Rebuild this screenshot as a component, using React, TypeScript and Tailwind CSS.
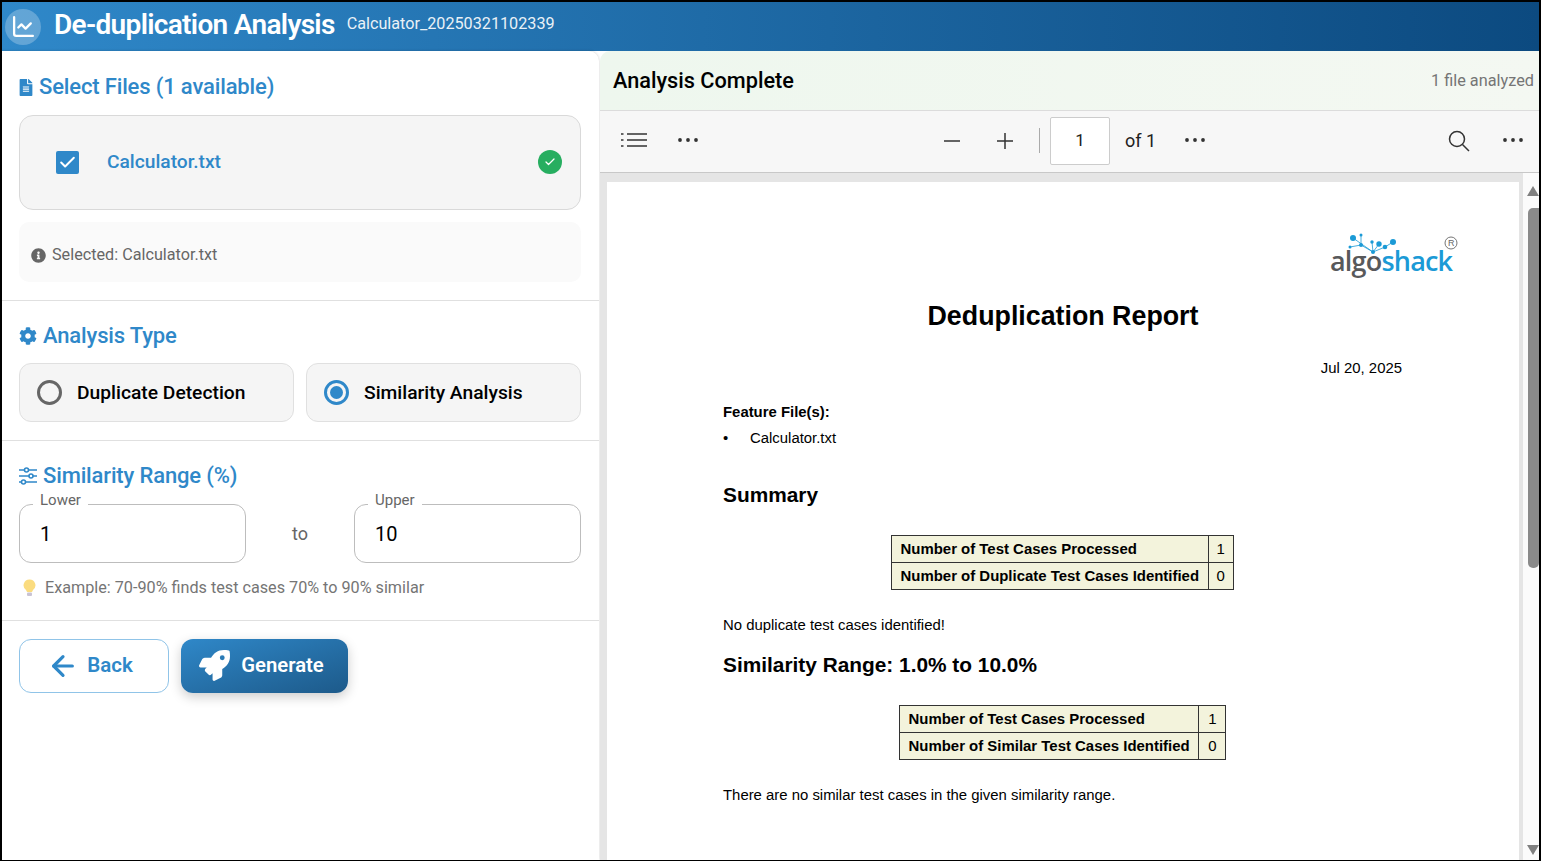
import { ArrowLeft, Check, ChartLine } from 'lucide-react'
import { FaCog, FaFileAlt, FaInfoCircle, FaRocket } from 'react-icons/fa'

const roboto = "font-['Roboto',sans-serif]"

function Dots() {
  return (
    <svg width="22" height="6" viewBox="0 0 22 6" className="shrink-0">
      <circle cx="3" cy="3" r="1.9" fill="#333" />
      <circle cx="11" cy="3" r="1.9" fill="#333" />
      <circle cx="19" cy="3" r="1.9" fill="#333" />
    </svg>
  )
}

function SlidersIcon() {
  return (
    <svg width="18" height="18" viewBox="0 0 18 18" fill="#fff" stroke="#2f88c9" strokeWidth="1.6">
      <path d="M0 3 H18 M0 9 H18 M0 15 H18" />
      <circle cx="7.5" cy="3" r="2" />
      <circle cx="12" cy="9" r="2" />
      <circle cx="4.5" cy="15" r="2" />
    </svg>
  )
}

function Radio({ label, checked }: { label: string; checked?: boolean }) {
  return (
    <div className="flex-1 h-[59px] flex items-center gap-[15px] pl-[17px] bg-[#f5f5f5] border border-[#e0e0e0] rounded-[12px]">
      {checked ? (
        <span className="w-[25px] h-[25px] rounded-full border-[3px] border-[#2f88c9] flex items-center justify-center">
          <span className="w-[13px] h-[13px] rounded-full bg-[#2f88c9]" />
        </span>
      ) : (
        <span className="w-[25px] h-[25px] rounded-full border-[3px] border-[#666]" />
      )}
      <span className="pt-[1px] text-[19.25px] font-medium text-black">{label}</span>
    </div>
  )
}

function RangeField({ label, value }: { label: string; value: string }) {
  return (
    <div className="relative flex-1 h-[59px] border border-[#bdbdbd] rounded-[12px] flex items-center pl-[20px] text-[20px] text-black">
      <span className="absolute left-[13px] top-[-14px] bg-white px-[7px] text-[15px] leading-[18px] text-[#666]">{label}</span>
      {value}
    </div>
  )
}

function ReportTable({ rows, className, countClass }: { rows: [string, string][]; className: string; countClass: string }) {
  return (
    <table className={`border-collapse bg-[#f3f3dc] text-[14.95px] leading-[17px] text-black ${className}`}>
      <tbody>
        {rows.map(([name, count]) => (
          <tr key={name}>
            <td className="border border-[#333] px-[8.5px] pt-[4px] pb-[5px] font-bold">{name}</td>
            <td className={`border border-[#333] pt-[4px] pb-[5px] text-center ${countClass}`}>{count}</td>
          </tr>
        ))}
      </tbody>
    </table>
  )
}

function Logo() {
  return (
    <div className="relative w-[128px] h-[45px] self-end mr-[61px]">
      <svg width="128" height="45" viewBox="0 0 128 45" className="absolute left-0 top-0">
        <g stroke="#1b9ad6" strokeWidth="0.8" fill="none">
          <path d="M23 6 L43 20 M20 15 L31 13 L43 20 M31 3 L31 13 M43 20 L42 10 M43 20 L49 12 M43 20 L55 15 L63 10" />
        </g>
        <g fill="#1b9ad6">
          <circle cx="23" cy="6" r="3" /><circle cx="31" cy="3" r="1.5" /><circle cx="20" cy="15" r="1.5" />
          <circle cx="31" cy="13" r="2" /><circle cx="43" cy="20" r="2" /><circle cx="42" cy="10" r="1.7" />
          <circle cx="49" cy="12" r="2.7" /><circle cx="55" cy="15" r="2.3" /><circle cx="63" cy="10" r="3" />
        </g>
        <circle cx="121" cy="11" r="6" fill="none" stroke="#666" strokeWidth="0.9" />
      </svg>
      <span className="absolute left-[118px] top-[5px] w-[6px] text-[9px] leading-[12px] text-[#666]">R</span>
      <span className="absolute left-0 top-[18px] text-[27px] leading-[22px] font-semibold font-['Open_Sans',sans-serif] tracking-[-0.8px]">
        <span className="text-[#58595b]">algo</span>
        <span className="text-[#1b9ad6]">shack</span>
      </span>
    </div>
  )
}

export default function App() {
  return (
    <div className={`w-[1541px] h-[861px] border-2 border-b border-black flex flex-col overflow-hidden ${roboto}`}>
      <header className="h-[49px] shrink-0 flex items-center pl-[3px] bg-gradient-to-r from-[#2f88c9] to-[#0c4a80] text-white">
        <span className="w-[36px] h-[36px] rounded-full bg-white/25 flex items-center justify-center">
          <ChartLine size={25} strokeWidth={2.2} />
        </span>
        <h1 className="ml-[13px] mb-[4px] text-[28px] font-semibold tracking-[-0.68px]">De-duplication Analysis</h1>
        <span className="ml-[12px] mb-[5px] text-[16.2px] opacity-90">Calculator_20250321102339</span>
      </header>

      <div className="flex-1 min-h-0 flex">
        <aside className="w-[597px] shrink-0 bg-white rounded-tr-[10px] shadow-[0_0_3px_rgba(0,0,0,0.2)]">
          <section className="h-[250px] pl-[17px] pr-[18px] pt-[20px] border-b border-[#e0e0e0]">
            <h2 className="flex items-center gap-[6px] text-[22px] leading-[32px] tracking-[-0.15px] font-medium text-[#2f88c9]">
              <FaFileAlt size={17} className="w-[14px]" />
              Select Files (1 available)
            </h2>
            <div className="mt-[12px] h-[95px] flex items-center pl-[36px] pr-[18px] bg-[#f5f5f5] border border-[#d9d9d9] rounded-[14px]">
              <span className="w-[23px] h-[23px] rounded-[2px] bg-[#2f88c9] flex items-center justify-center text-white">
                <Check size={19} strokeWidth={2.5} />
              </span>
              <span className="ml-[28px] text-[19.2px] font-medium text-[#2f88c9]">Calculator.txt</span>
              <span className="ml-auto mb-[1px] w-[24px] h-[24px] rounded-full bg-[#27ae60] flex items-center justify-center text-white">
                <Check size={12} strokeWidth={2.5} />
              </span>
            </div>
            <div className="mt-[12px] h-[60px] flex items-center gap-[6px] pl-[12px] pt-[7px] bg-[#fafafa] rounded-[10px] text-[16.2px] text-[#666]">
              <FaInfoCircle size={15} />
              Selected: Calculator.txt
            </div>
          </section>

          <section className="h-[140px] pl-[17px] pr-[18px] pt-[19px] border-b border-[#e0e0e0]">
            <h2 className="flex items-center gap-[6px] text-[22px] leading-[32px] tracking-[-0.15px] font-medium text-[#2f88c9]">
              <FaCog size={18} />
              Analysis Type
            </h2>
            <div className="mt-[11px] flex gap-[12px]">
              <Radio label="Duplicate Detection" />
              <Radio label="Similarity Analysis" checked />
            </div>
          </section>

          <section className="h-[180px] pl-[17px] pr-[18px] pt-[19px] border-b border-[#e0e0e0]">
            <h2 className="flex items-center gap-[6px] text-[22px] leading-[32px] tracking-[-0.15px] font-medium text-[#2f88c9]">
              <SlidersIcon />
              Similarity Range (%)
            </h2>
            <div className="mt-[12px] flex items-center">
              <RangeField label="Lower" value="1" />
              <span className="w-[108px] text-center text-[18px] text-[#666]">to</span>
              <RangeField label="Upper" value="10" />
            </div>
            <p className="mt-[15px] flex items-center gap-[9px] pl-[4px] text-[16.2px] leading-[20px] text-[#757575]">
              <svg width="13" height="18" viewBox="0 0 13 18">
                <path d="M6.5 0.5 A5.8 5.8 0 0 1 10 11 L9 13 H4 L3 11 A5.8 5.8 0 0 1 6.5 0.5Z" fill="#fbdc7f" />
                <rect x="4" y="13.5" width="5" height="3.5" rx="1" fill="#c9c3d3" />
              </svg>
              Example: 70-90% finds test cases 70% to 90% similar
            </p>
          </section>

          <div className="pl-[17px] pt-[18px] flex gap-[12px]">
            <button className="w-[150px] h-[54px] flex items-center justify-center gap-[8px] pr-[8px] pb-[1px] border border-[#90c4e8] rounded-[12px] text-[20.5px] font-semibold text-[#2f88c9]">
              <ArrowLeft size={32} strokeWidth={2.4} />
              Back
            </button>
            <button className="w-[167px] h-[54px] flex items-center justify-center gap-[11px] pr-[6px] pb-[1px] rounded-[12px] bg-gradient-to-br from-[#2f88c9] to-[#1d5a8a] text-[20.3px] font-semibold text-white shadow-[0_4px_12px_rgba(0,0,0,0.2)]">
              <FaRocket size={31} />
              Generate
            </button>
          </div>
        </aside>

        <main className="flex-1 min-w-0 ml-[1px] flex flex-col">
          <div className="h-[60px] shrink-0 flex items-center justify-between pl-[13px] pr-[5px] rounded-tl-[10px] bg-gradient-to-r from-[#eef7ee] to-[#f4f8f2] border-b border-[#dcdcdc]">
            <span className="pt-[1px] text-[21.7px] font-medium text-black">Analysis Complete</span>
            <span className="pt-[1px] text-[16.3px] text-[#757575]">1 file analyzed</span>
          </div>

          <div className="h-[62px] shrink-0 flex items-center pl-[21px] pr-[15px] pb-[2px] bg-[#f7f7f7] border-b border-[#c8c8c8] text-[#222]">
            <svg width="26" height="16" viewBox="0 0 26 16" fill="none" stroke="#333" strokeWidth="1.4" className="mb-[1px]">
              <path d="M6 2 H26 M6 8 H26 M6 14 H26 M0 2 H2.5 M0 8 H2.5 M0 14 H2.5" />
            </svg>
            <span className="ml-[30px] mb-[1px]"><Dots /></span>
            <svg width="18" height="18" viewBox="0 0 18 18" stroke="#333" strokeWidth="1.5" className="ml-[244px]">
              <path d="M1 9 H17" />
            </svg>
            <svg width="18" height="18" viewBox="0 0 18 18" stroke="#333" strokeWidth="1.5" className="ml-[35px]">
              <path d="M1 9 H17 M9 1 V17" />
            </svg>
            <span className="ml-[25px] w-px h-[25px] bg-[#aaa]" />
            <span className="ml-[10px] w-[60px] h-[48px] pt-[1px] bg-white border border-[#ccc] rounded-[2px] flex items-center justify-center text-[17px]">1</span>
            <span className="ml-[15px] text-[18px]">of 1</span>
            <span className="ml-[28px] mb-[1px]"><Dots /></span>
            <svg width="24" height="24" viewBox="0 0 24 24" fill="none" stroke="#333" strokeWidth="1.5" className="ml-auto">
              <circle cx="10" cy="10" r="7.5" />
              <path d="M15.5 15.5 L22 22" />
            </svg>
            <span className="ml-[31px] mb-[1px]"><Dots /></span>
          </div>

          <div className="flex-1 min-h-0 flex bg-[#e5e5e5]">
            <div className="flex-1 min-w-0 pl-[7px] pt-[9px] pr-[4px] overflow-hidden">
              <article className="h-[700px] bg-white flex flex-col pt-[50px] font-['Liberation_Sans',sans-serif] text-black">
                <Logo />
                <h3 className="mt-[22px] text-center text-[26.8px] leading-[34px] font-bold">Deduplication Report</h3>
                <p className="mt-[27px] self-end mr-[117px] text-[14.9px] leading-[17px]">Jul 20, 2025</p>
                <div className="pl-[116px]">
                  <p className="mt-[27px] text-[14.9px] leading-[17px] font-bold">Feature File(s):</p>
                  <p className="mt-[9px] text-[14.9px] leading-[17px] flex">
                    <span className="w-[27px]">•</span>Calculator.txt
                  </p>
                  <p className="mt-[35px] text-[20.85px] leading-[26px] font-bold">Summary</p>
                  <ReportTable
                    className="mt-[27px] ml-[168px]"
                    countClass="px-[8px]"
                    rows={[
                      ['Number of Test Cases Processed', '1'],
                      ['Number of Duplicate Test Cases Identified', '0'],
                    ]}
                  />
                  <p className="mt-[27px] text-[14.9px] leading-[17px]">No duplicate test cases identified!</p>
                  <p className="mt-[18px] text-[20.85px] leading-[26px] font-bold">Similarity Range: 1.0% to 10.0%</p>
                  <ReportTable
                    className="mt-[27px] ml-[176px]"
                    countClass="px-[9px]"
                    rows={[
                      ['Number of Test Cases Processed', '1'],
                      ['Number of Similar Test Cases Identified', '0'],
                    ]}
                  />
                  <p className="mt-[27px] text-[14.9px] leading-[17px]">There are no similar test cases in the given similarity range.</p>
                </div>
              </article>
            </div>
            <div className="w-[16px] shrink-0 bg-[#fbfbfb] flex flex-col items-end relative">
              <span className="absolute right-0 top-[13px] w-0 h-0 border-x-[6px] border-x-transparent border-b-[10px] border-b-[#808080]" />
              <span className="mt-[35px] w-[11px] h-[360px] rounded-l-[5px] rounded-b-[5px] bg-[#8a8a8a]" />
              <span className="absolute right-0 bottom-[5px] w-0 h-0 border-x-[6px] border-x-transparent border-t-[10px] border-t-[#808080]" />
            </div>
          </div>
        </main>
      </div>
    </div>
  )
}
